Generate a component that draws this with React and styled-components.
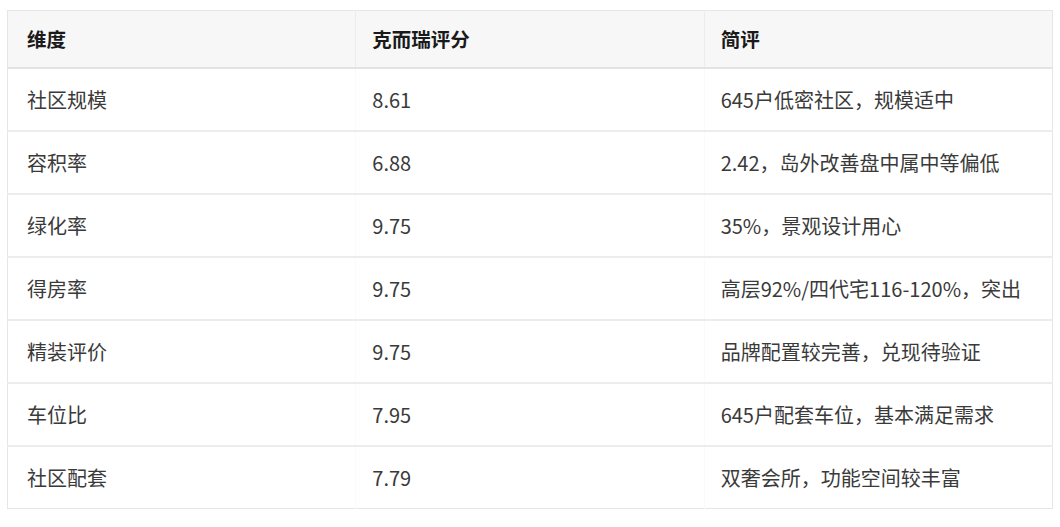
import React from "react";
import styled, { createGlobalStyle } from "styled-components";

const GlobalStyle = createGlobalStyle`
	html, body {
		margin: 0;
		padding: 0;
		background: #ffffff;
	}
	body {
		font-family: "Noto Sans CJK SC", "Noto Sans", sans-serif;
	}
`;

const Page = styled.div`
	padding: 10px 8px 0 7px;
	width: 1046px;
`;

const StyledTable = styled.table`
	width: 100%;
	border-collapse: collapse;
	table-layout: fixed;
	border: 1px solid #e6e6e6;
`;

const HeadCell = styled.th`
	height: 57px;
	padding: 0 ${(p) => (p.$first ? "19px" : "16px")};
	background: #f7f7f7;
	border-bottom: 2px solid #e3e3e3;
	border-left: 1px solid ${(p) => (p.$first ? "#e6e6e6" : "#ececec")};
	text-align: left;
	font-size: 19.5px;
	font-weight: 700;
	color: #1a1a1a;
	box-sizing: border-box;
`;

const Row = styled.tr`
	border-bottom: 2px solid #ececec;
	&:last-child {
		border-bottom: 1px solid #e6e6e6;
	}
`;

const Cell = styled.td`
	height: 63px;
	padding: 0 ${(p) => (p.$first ? "19px" : "16px")};
	border-left: 1px solid ${(p) => (p.$first ? "#e6e6e6" : "#fafafa")};
	font-size: 20px;
	color: #3a3a3a;
	white-space: nowrap;
	box-sizing: border-box;
`;

const rows = [
	{ name: "社区规模", score: "8.61", note: "645户低密社区，规模适中" },
	{ name: "容积率", score: "6.88", note: "2.42，岛外改善盘中属中等偏低" },
	{ name: "绿化率", score: "9.75", note: "35%，景观设计用心" },
	{ name: "得房率", score: "9.75", note: "高层92%/四代宅116-120%，突出" },
	{ name: "精装评价", score: "9.75", note: "品牌配置较完善，兑现待验证" },
	{ name: "车位比", score: "7.95", note: "645户配套车位，基本满足需求" },
	{ name: "社区配套", score: "7.79", note: "双奢会所，功能空间较丰富" },
];

const App = () => {
	return (
		<>
			<GlobalStyle />
			<Page>
				<StyledTable>
					<thead>
						<tr>
							<HeadCell $first>维度</HeadCell>
							<HeadCell>克而瑞评分</HeadCell>
							<HeadCell>简评</HeadCell>
						</tr>
					</thead>
					<tbody>
						{rows.map((r) => (
							<Row key={r.name}>
								<Cell $first>{r.name}</Cell>
								<Cell>{r.score}</Cell>
								<Cell>{r.note}</Cell>
							</Row>
						))}
					</tbody>
				</StyledTable>
			</Page>
		</>
	);
};

export default App;
